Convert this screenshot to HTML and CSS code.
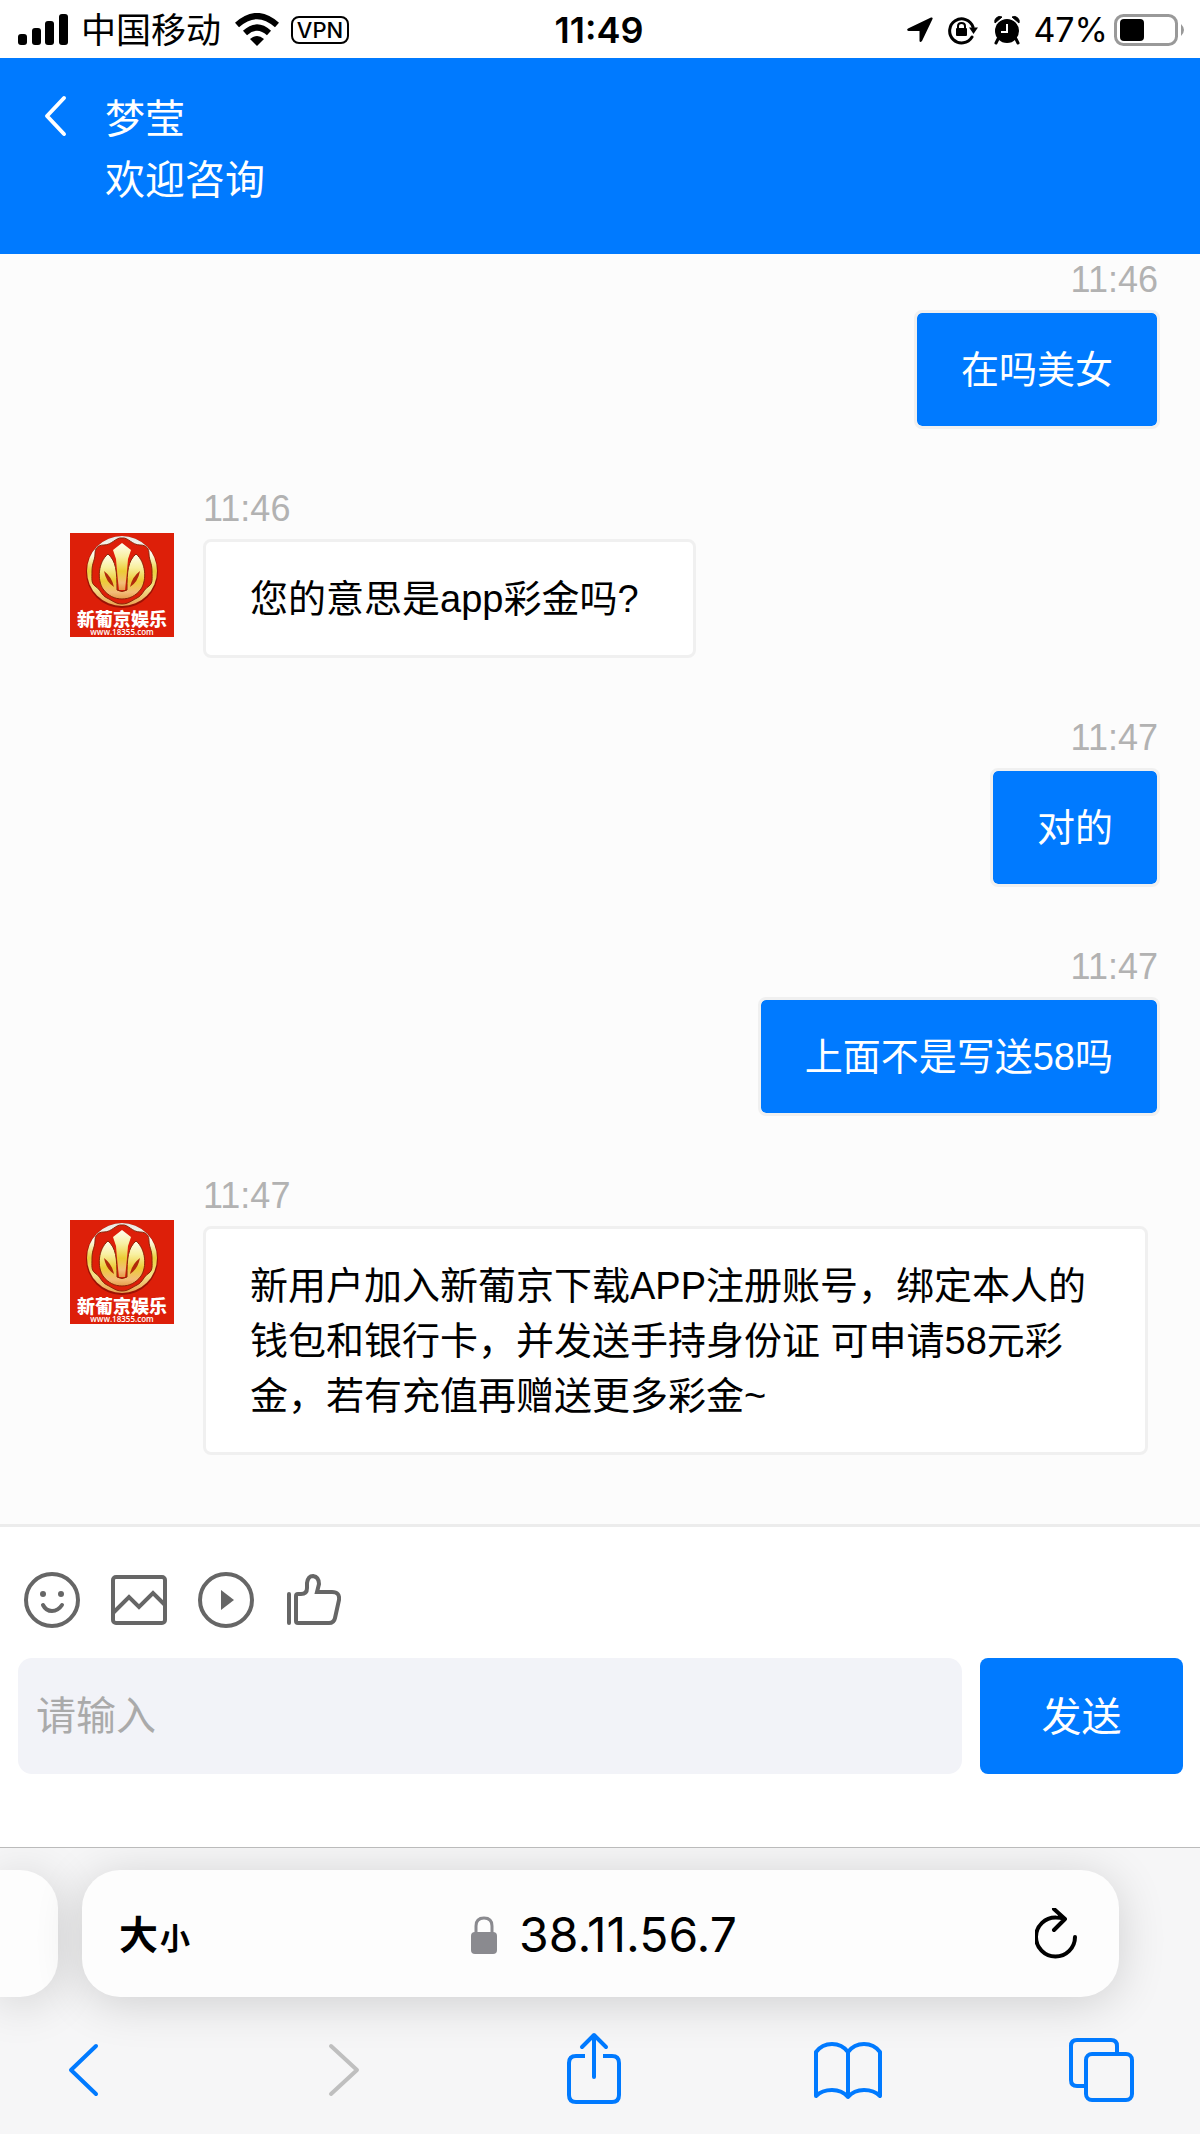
FILE: index.html
```html
<!DOCTYPE html>
<html lang="zh-CN">
<head>
<meta charset="utf-8">
<meta name="viewport" content="width=device-width, initial-scale=1">
<title>在线咨询</title>
<link rel="stylesheet" href="styles.css">
</head>
<body>
<svg class="defs" width="0" height="0" aria-hidden="true">
  <defs>
    <linearGradient id="gold" x1="0" y1="0" x2="0" y2="1">
      <stop offset="0" stop-color="#fffef0"/>
      <stop offset=".3" stop-color="#f8f0a0"/>
      <stop offset=".6" stop-color="#eccb35"/>
      <stop offset=".85" stop-color="#f3bd78"/>
      <stop offset="1" stop-color="#e59a4a"/>
    </linearGradient>
    <linearGradient id="ring" x1="0" y1="0" x2="0" y2="1">
      <stop offset="0" stop-color="#e8e8e4"/>
      <stop offset=".25" stop-color="#fffdf0"/>
      <stop offset=".5" stop-color="#e9cf3c"/>
      <stop offset=".75" stop-color="#f3e08a"/>
      <stop offset="1" stop-color="#e8a050"/>
    </linearGradient>
    <symbol id="logo" viewBox="0 0 104 104">
      <rect width="104" height="104" fill="#dd1f09"/>
      <circle cx="52" cy="39" r="36" fill="#9a1204"/>
      <circle cx="52" cy="38" r="35" fill="url(#ring)"/>
      <path d="M52 5C46 4 42 12 34 12C27 12 25 16 25 21C25 27 22 30 22 38C22 46 21 50 25 53C31 57 31 62 37 65C43 68 46 71 52 71C58 71 61 68 67 65C73 62 73 57 79 53C83 50 82 46 82 38C82 30 79 27 79 21C79 16 77 12 70 12C62 12 58 4 52 5Z" fill="#dd1f09" stroke="#8a2408"/>
      <path d="M38 21C28 29 27 47 33 56C38 63 45 66 52 66C59 66 66 63 71 56C77 47 76 29 66 21C58 28 57 38 57 57Q52 60 47 57C47 38 46 28 38 21Z" fill="url(#gold)" stroke="#8a2408"/>
      <path d="M52 10L61 17L58 26Q57 40 55 57H49Q47 40 46 26L43 17Z" fill="url(#gold)"/>
      <path d="M34 38Q36 49 44 54Q42 44 34 38ZM70 38Q68 49 60 54Q62 44 70 38Z" fill="#b02a0a"/>
      <text class="logo-name" x="52" y="93" text-anchor="middle">新葡京娱乐</text>
      <text class="logo-url" x="52" y="102" text-anchor="middle">www.18355.com</text>
    </symbol>
  </defs>
</svg>

<div class="status">
  <div class="status-left">
    <svg width="50" height="32" viewBox="0 0 50 32" aria-hidden="true">
      <rect x="0" y="20" width="9" height="11" rx="3"/><rect x="14" y="14" width="9" height="17" rx="3"/><rect x="27" y="7" width="9" height="24" rx="3"/><rect x="41" y="0" width="9" height="31" rx="3"/>
    </svg>
    <span class="carrier">中国移动</span>
    <svg width="44" height="34" viewBox="0 0 44 34" aria-hidden="true">
      <g fill="none" stroke="#000" stroke-width="6"><path d="M2 12Q22 -6 42 12"/><path d="M10 20Q22 9 34 20"/></g>
      <path d="M15 26Q22 20 29 26L22 33Z"/>
    </svg>
    <span class="vpn">VPN</span>
  </div>
  <time class="clock">11:49</time>
  <div class="status-right">
    <svg width="26" height="28" viewBox="0 0 26 28" aria-hidden="true"><path d="M25 1.500Q26 2 25.500 3L15 25Q13 27 12.500 25V15H1.500Q-1 14 1 12.500L24 1.500Z"/></svg>
    <svg width="32" height="30" viewBox="0 0 32 30" aria-hidden="true">
      <path d="M25 22A12 12 0 1 1 26 12" fill="none" stroke="#000" stroke-width="3" stroke-linecap="round"/>
      <path d="M22 12.500H31L26.500 19Z"/><rect x="9" y="13" width="11" height="8" rx="1"/>
      <path d="M11 13V11Q11 8 14.500 8T18 11V13" fill="none" stroke="#000" stroke-width="2"/>
    </svg>
    <svg width="28" height="30" viewBox="0 0 28 30" aria-hidden="true">
      <circle cx="14" cy="16" r="12"/><path d="M2 8A5 5 0 0 1 9 2ZM26 8A5 5 0 0 0 19 2Z" stroke="#000" stroke-linejoin="round"/><path d="M5 24L3 28M23 24L25 28" stroke="#000" stroke-width="3" stroke-linecap="round"/>
      <path d="M14 9V17H8" fill="none" stroke="#fff" stroke-width="2"/>
    </svg>
    <span class="percent">47%</span>
    <svg width="70" height="34" viewBox="0 0 70 34" aria-hidden="true">
      <rect x="1.500" y="2.500" width="61" height="29" rx="8" fill="none" stroke="#999" stroke-width="3"/>
      <rect x="6" y="6" width="24" height="22" rx="4"/><path d="M67 11Q70 14 70 17T67 23Z" fill="#999"/>
    </svg>
  </div>
</div>

<header class="header">
  <button class="back" aria-label="返回"><svg width="24" height="42" viewBox="0 0 24 42"><path d="M20 3L3 21L20 39" fill="none" stroke="#fff" stroke-width="4" stroke-linecap="round" stroke-linejoin="round"/></svg></button>
  <div class="titles"><h1>梦莹</h1><p>欢迎咨询</p></div>
</header>

<main class="chat">
  <article class="message sent"><div class="body"><time>11:46</time><p class="bubble">在吗美女</p></div></article>
  <article class="message">
    <svg class="avatar" role="img" aria-label="新葡京娱乐"><use href="#logo"/></svg>
    <div class="body"><time>11:46</time><p class="bubble">您的意思是app彩金吗?&nbsp;</p></div>
  </article>
  <article class="message sent"><div class="body"><time>11:47</time><p class="bubble">对的</p></div></article>
  <article class="message sent"><div class="body"><time>11:47</time><p class="bubble">上面不是写送58吗</p></div></article>
  <article class="message">
    <svg class="avatar" role="img" aria-label="新葡京娱乐"><use href="#logo"/></svg>
    <div class="body"><time>11:47</time><p class="bubble">新用户加入新葡京下载APP注册账号，绑定本人的钱包和银行卡，并发送手持身份证 可申请58元彩金，若有充值再赠送更多彩金~</p></div>
  </article>
</main>

<form class="composer">
  <div class="tools">
    <button type="button" aria-label="表情"><svg viewBox="0 0 56 56"><circle cx="28" cy="28" r="26"/><path d="M19 33Q22 39 28 39T38 33" stroke-linecap="round"/><g class="solid"><circle cx="19" cy="22" r="3"/><circle cx="37" cy="22" r="3"/></g></svg></button>
    <button type="button" aria-label="图片"><svg viewBox="0 0 56 56"><rect x="2" y="5" width="52" height="46" rx="3"/><path d="M2 41L18 25L28 35L42 21L54 33"/></svg></button>
    <button type="button" aria-label="视频"><svg viewBox="0 0 56 56"><circle cx="28" cy="28" r="26"/><path class="solid" d="M23 18L36 28L23 38Z"/></svg></button>
    <button type="button" aria-label="点赞"><svg viewBox="0 0 56 56"><path d="M4 22V51" stroke-linecap="round"/><path d="M11 24Q11 22 13 22H16Q22 22 22 16V11Q23 4 28 4Q34 5 34 12L32 20H47Q55 20 54 28L50 46Q49 51 44 51H13Q11 51 11 49Z"/></svg></button>
  </div>
  <div class="entry">
    <input type="text" placeholder="请输入" aria-label="请输入">
    <button class="send">发送</button>
  </div>
</form>

<footer class="browser">
  <div class="tabs">
    <div class="tab previous"></div>
    <div class="tab current">
      <button class="text-size"><span>大</span><small>小</small></button>
      <a class="address" href="#">
        <svg width="28" height="38" viewBox="0 0 28 38" aria-hidden="true"><rect x="1" y="16" width="26" height="22" rx="4" fill="#8a8a8f"/><path d="M6 17V10Q6 2 14 2T22 10V17" fill="none" stroke="#8a8a8f" stroke-width="3"/></svg>
        <span>38.11.56.7</span>
      </a>
      <button class="reload" aria-label="刷新"><svg width="44" height="54" viewBox="0 0 44 54"><path d="M40 29A19.500 19.500 0 1 1 21 9.500Q25 9.500 30 11M19 1L30 11L19 22" fill="none" stroke="#000" stroke-width="4" stroke-linecap="round" stroke-linejoin="round"/></svg></button>
    </div>
    <div class="tab next"></div>
  </div>
  <nav class="nav">
    <button aria-label="后退"><svg viewBox="0 0 80 80"><path d="M52 16L27 40L52 64"/></svg></button>
    <button aria-label="前进" disabled><svg viewBox="0 0 80 80"><path d="M33 16L59 40L33 64"/></svg></button>
    <button aria-label="分享"><svg viewBox="0 0 80 80"><path d="M41 6V47M29 17L41 5L53 17" /><path d="M32 26H23Q16 26 16 33V65Q16 72 23 72H59Q66 72 66 65V33Q66 26 59 26H50" stroke-linecap="butt"/></svg></button>
    <button aria-label="书签"><svg viewBox="0 0 80 80"><path d="M41 22Q35 14 25 14T9 22V66Q15 60 25 60T41 67Q47 60 57 60T73 66V22Q67 14 57 14T41 22V67"/></svg></button>
    <button aria-label="标签页"><svg viewBox="0 0 80 80"><rect x="25" y="24" width="46" height="46" rx="6"/><path d="M24 56H16Q10 56 10 50V16Q10 10 16 10H50Q56 10 56 16V23"/></svg></button>
  </nav>
</footer>
</body>
</html>
```
FILE: styles.css
```css
* { box-sizing: border-box; }

body {
  margin: 0;
  min-height: 100vh;
  display: flex;
  flex-direction: column;
  background: #fff;
  color: #000;
  font-family: "Liberation Sans", "Noto Sans CJK SC", sans-serif;
}

h1, p { margin: 0; font-size: inherit; font-weight: 400; }
svg { display: block; flex: none; }
button {
  padding: 0;
  border: 0;
  background: none;
  color: inherit;
  font: inherit;
}
.defs { position: absolute; }

/* Status bar */
.status {
  display: grid;
  grid-template-columns: 1fr auto 1fr;
  align-items: center;
  height: 58px;
  padding: 2px 16px 0 18px;
  font-family: Inter, "Noto Sans CJK SC", sans-serif;
  font-size: 34px;
  line-height: 40px;
}
.status-left, .status-right { display: flex; align-items: center; }
.status-right { justify-content: flex-end; gap: 14px; }
.carrier { margin: 0 14px 0 13px; font-size: 35px; }
.vpn {
  margin-left: 12px;
  width: 58px;
  border: 2px solid #000;
  border-radius: 8px;
  font-size: 22px;
  font-weight: 500;
  line-height: 24px;
  text-align: center;
}
.clock { padding-right: 4px; font-size: 36px; font-weight: 600; }
.percent { margin: 0 -8px 0 -2px; }

/* Chat header */
.header {
  display: flex;
  align-items: flex-start;
  gap: 37px;
  padding: 31px 44px 42px;
  background: #007aff;
  color: #fff;
  font-size: 40px;
  line-height: 61px;
}
.back { display: flex; padding-top: 6px; line-height: 0; }
.titles { min-height: 123px; }

/* Conversation */
.chat {
  flex: 1;
  display: flex;
  flex-direction: column;
  gap: 60px;
  padding: 6px 40px 69px 70px;
  background: #fcfcfc;
}
.message { display: flex; gap: 29px; }
.sent { justify-content: flex-end; }
.avatar { width: 104px; height: 104px; margin-top: 44px; }
.logo-name { font: 900 18px "Noto Sans CJK SC", sans-serif; fill: #fff; }
.logo-url { font: 600 8px "Open Sans", sans-serif; fill: #fff; }
.body {
  display: flex;
  flex-direction: column;
  align-items: flex-start;
  gap: 10px;
  max-width: 945px;
}
.sent .body { align-items: flex-end; }
.body time { font-size: 36px; line-height: 40px; color: #b2b2b2; }
.sent time { padding-right: 2px; }
.bubble {
  padding: 30px 44px 28px;
  border: 3px solid #f0f0f0;
  border-radius: 8px;
  background: #fff;
  font-size: 38px;
  line-height: 55px;
}
.sent .bubble {
  background: #007aff;
  background-clip: padding-box;
  color: #fff;
}

/* Composer */
.composer {
  display: flex;
  flex-direction: column;
  gap: 30px;
  padding: 45px 17px 73px 18px;
  border-top: 3px solid #ececec;
  font-size: 40px;
}
.tools { display: flex; gap: 31px; padding-left: 6px; }
.tools svg { width: 56px; height: 56px; fill: none; stroke: #666; stroke-width: 4px; }
.tools .solid { fill: #666; stroke: none; }
.entry { display: flex; gap: 18px; height: 116px; }
.entry input {
  flex: 1;
  min-width: 0;
  padding: 0 18px;
  border: 0;
  border-radius: 14px;
  background: #f2f3f8;
  font: inherit;
}
.entry input::placeholder { color: #aaa; }
.send {
  width: 203px;
  padding-bottom: 4px;
  border-radius: 8px;
  background: #007aff;
  color: #fff;
}

/* Browser controls */
.browser {
  overflow: hidden;
  padding-top: 22px;
  border-top: 1px solid #bbb;
  background: #f6f6f7;
  font-family: Inter, "Noto Sans CJK SC", sans-serif;
}
.tabs { display: flex; gap: 24px; height: 127px; }
.tab {
  background: #fdfdfd;
  border-radius: 38px;
  box-shadow: 0 6px 48px rgba(0, 0, 0, .16);
}
.previous { width: 58px; border-radius: 0 38px 38px 0; }
.next { width: 57px; visibility: hidden; }
.current {
  flex: 1;
  display: grid;
  grid-template-columns: 1fr auto 1fr;
  align-items: center;
  padding: 2px 40px 0 37px;
}
.text-size {
  justify-self: start;
  display: flex;
  align-items: baseline;
  gap: 2px;
  padding-top: 4px;
  font-size: 39px;
  font-weight: 700;
  line-height: 56px;
}
.text-size small { font-size: 30px; }
.address {
  display: flex;
  align-items: center;
  gap: 21px;
  padding-left: 9px;
  color: #000;
  font-size: 48px;
  text-decoration: none;
}
.reload { justify-self: end; }
.nav {
  display: flex;
  justify-content: space-between;
  padding: 33px 59px 24px 44px;
}
.nav svg {
  width: 80px;
  height: 80px;
  fill: none;
  stroke: #007aff;
  stroke-width: 4px;
  stroke-linecap: round;
  stroke-linejoin: round;
}
.nav :disabled svg { stroke: #bfbfbf; }
```
